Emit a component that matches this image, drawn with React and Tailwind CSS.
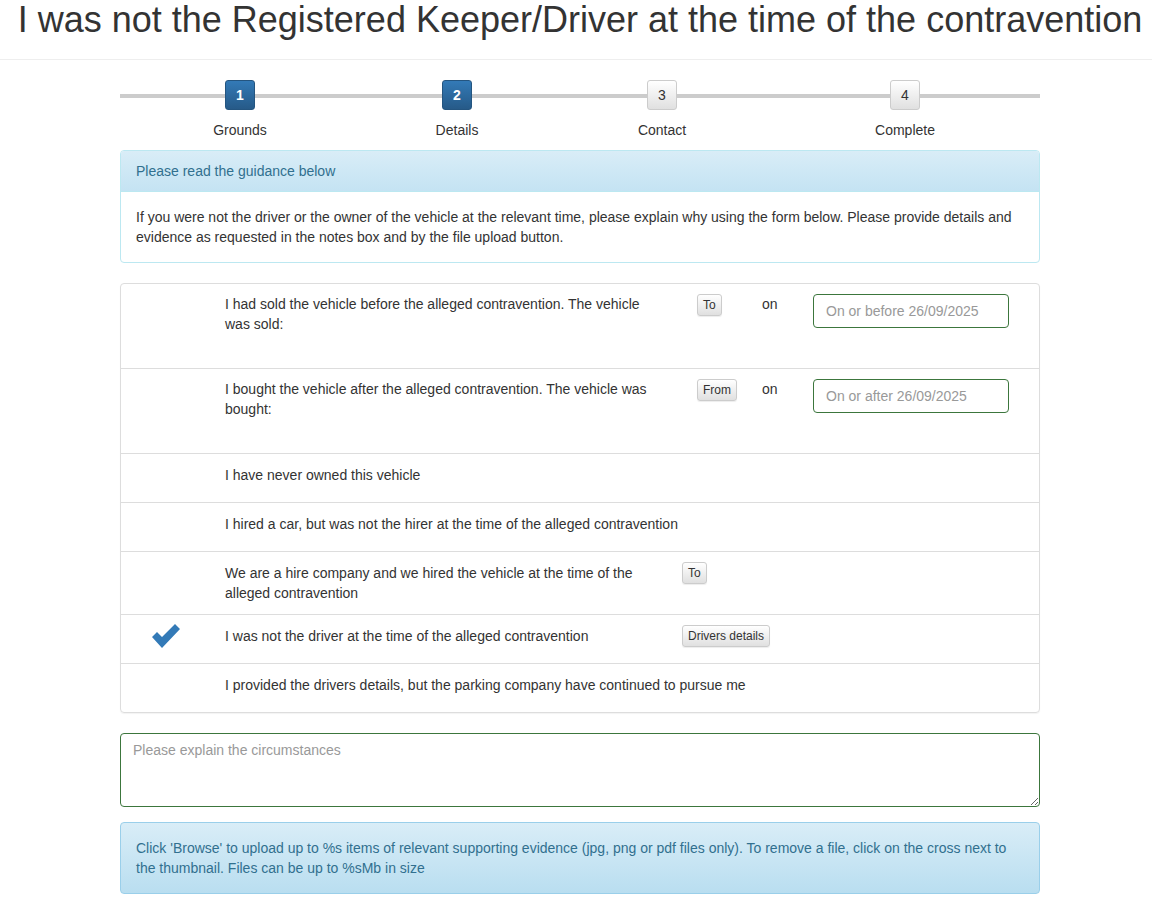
import React from 'react';

const steps = [
    { n: 1, label: 'Grounds', w: 'w-[240px]', active: true },
    { n: 2, label: 'Details', w: 'w-[194px]', active: true },
    { n: 3, label: 'Contact', w: 'w-[216px]', active: false },
    { n: 4, label: 'Complete', w: 'w-[270px]', active: false },
];

const SmallBtn = ({ children }) => (
    <button className="h-[22px] px-[5px] text-[12px] leading-[18px] text-[#333] border border-[#ccc] rounded-[3px] bg-gradient-to-b from-white to-[#e0e0e0] shadow-[inset_0_1px_0_rgba(255,255,255,0.15),0_1px_1px_rgba(0,0,0,0.075)]">
        {children}
    </button>
);

const Check = () => (
    <svg width="30" height="26" viewBox="0 0 30 26">
        <path d="M1 14 L6 9 L11 14 L24 1 L29 6 L11 25 Z" fill="#337ab7" />
    </svg>
);

const DateRow = ({ text, btn, placeholder, h = 'h-[85px]' }) => (
    <div className={`flex ${h} border-b border-[#ddd] pt-[10px]`}>
        <div className="w-[104px] shrink-0" />
        <div className="w-[472px] shrink-0 pr-[30px] leading-[20px]">{text}</div>
        <div className="w-[65px] shrink-0"><SmallBtn>{btn}</SmallBtn></div>
        <div className="w-[51px] shrink-0 leading-[20px]">on</div>
        <input
            placeholder={placeholder}
            className="w-[196px] h-[34px] px-[12px] border border-[#3c763d] rounded-[4px] text-[14px] placeholder:text-[#999] outline-none"
        />
    </div>
);

const SimpleRow = ({ text, check, btn, h = 'h-[49px]', last }) => (
    <div className={`flex items-start pt-[11px] ${h} ${last ? '' : 'border-b border-[#ddd]'}`}>
        <div className="w-[104px] shrink-0 pl-[30px] -mt-[3px]">{check ? <Check /> : null}</div>
        <div className={btn ? 'w-[457px] shrink-0 leading-[20px] pr-[40px]' : 'leading-[20px]'}>{text}</div>
        {btn ? <div className="shrink-0 -mt-[1px]"><SmallBtn>{btn}</SmallBtn></div> : null}
    </div>
);

const App = () => {
    return (
        <div className="min-h-[910px] bg-white text-[#333] text-[14px] font-['Liberation_Sans',Arial,sans-serif]">
            <div className="border-b border-[#eee] pb-[19px] pl-[8px]">
                <h1 className="text-center text-[36px] leading-[40px] whitespace-nowrap">
                    I was not the Registered Keeper/Driver at the time of the contravention
                </h1>
            </div>

            <div className="w-[920px] ml-[120px]">
                {/* stepper */}
                <div className="relative mt-[20px] flex">
                    <div className="absolute left-0 right-0 top-[14px] h-[4px] bg-[#ccc]" />
                    {steps.map(s => (
                        <div key={s.n} className={`${s.w} relative flex flex-col items-center`}>
                            <div
                                className={
                                    s.active
                                        ? 'w-[30px] h-[30px] flex items-center justify-center rounded-[3px] border border-[#245580] bg-gradient-to-b from-[#337ab7] to-[#265a88] text-white font-bold text-[14px]'
                                        : 'w-[30px] h-[30px] flex items-center justify-center rounded-[3px] border border-[#ccc] bg-gradient-to-b from-white to-[#e0e0e0] text-[#333] text-[14px]'
                                }
                            >
                                {s.n}
                            </div>
                            <div className="mt-[10px] leading-[20px]">{s.label}</div>
                        </div>
                    ))}
                </div>

                {/* guidance */}
                <div className="mt-[10px] border border-[#bce8f1] rounded-[4px] overflow-hidden">
                    <div className="h-[41px] px-[15px] flex items-center text-[#31708f] bg-gradient-to-b from-[#d9edf7] to-[#c4e3f3] border-b border-[#bce8f1]">
                        Please read the guidance below
                    </div>
                    <div className="px-[15px] py-[15px] leading-[20px]">
                        If you were not the driver or the owner of the vehicle at the relevant time, please explain why using the form below. Please provide details and evidence as requested in the notes box and by the file upload button.
                    </div>
                </div>

                {/* options */}
                <div className="mt-[20px] border border-[#ddd] rounded-[4px] shadow-[0_1px_1px_rgba(0,0,0,0.05)]">
                    <DateRow
                        text="I had sold the vehicle before the alleged contravention. The vehicle was sold:"
                        btn="To"
                        placeholder="On or before 26/09/2025"
                    />
                    <DateRow
                        text="I bought the vehicle after the alleged contravention. The vehicle was bought:"
                        btn="From"
                        placeholder="On or after 26/09/2025"
                    />
                    <SimpleRow text="I have never owned this vehicle" />
                    <SimpleRow text="I hired a car, but was not the hirer at the time of the alleged contravention" />
                    <SimpleRow
                        text="We are a hire company and we hired the vehicle at the time of the alleged contravention"
                        btn="To"
                        h="h-[63px]"
                    />
                    <SimpleRow text="I was not the driver at the time of the alleged contravention" check btn="Drivers details" />
                    <SimpleRow text="I provided the drivers details, but the parking company have continued to pursue me" h="h-[48px]" last />
                </div>

                <textarea
                    placeholder="Please explain the circumstances"
                    className="block mt-[20px] w-full h-[74px] px-[12px] py-[6px] border border-[#3c763d] rounded-[4px] text-[14px] leading-[20px] placeholder:text-[#999] outline-none"
                />

                <div className="mt-[15px] px-[15px] py-[15px] border border-[#9acfea] rounded-[4px] text-[#31708f] leading-[20px] bg-gradient-to-b from-[#d9edf7] to-[#b9def0]">
                    Click 'Browse' to upload up to %s items of relevant supporting evidence (jpg, png or pdf files only). To remove a file, click on the cross next to the thumbnail. Files can be up to %sMb in size
                </div>
            </div>
        </div>
    );
};

export default App;
